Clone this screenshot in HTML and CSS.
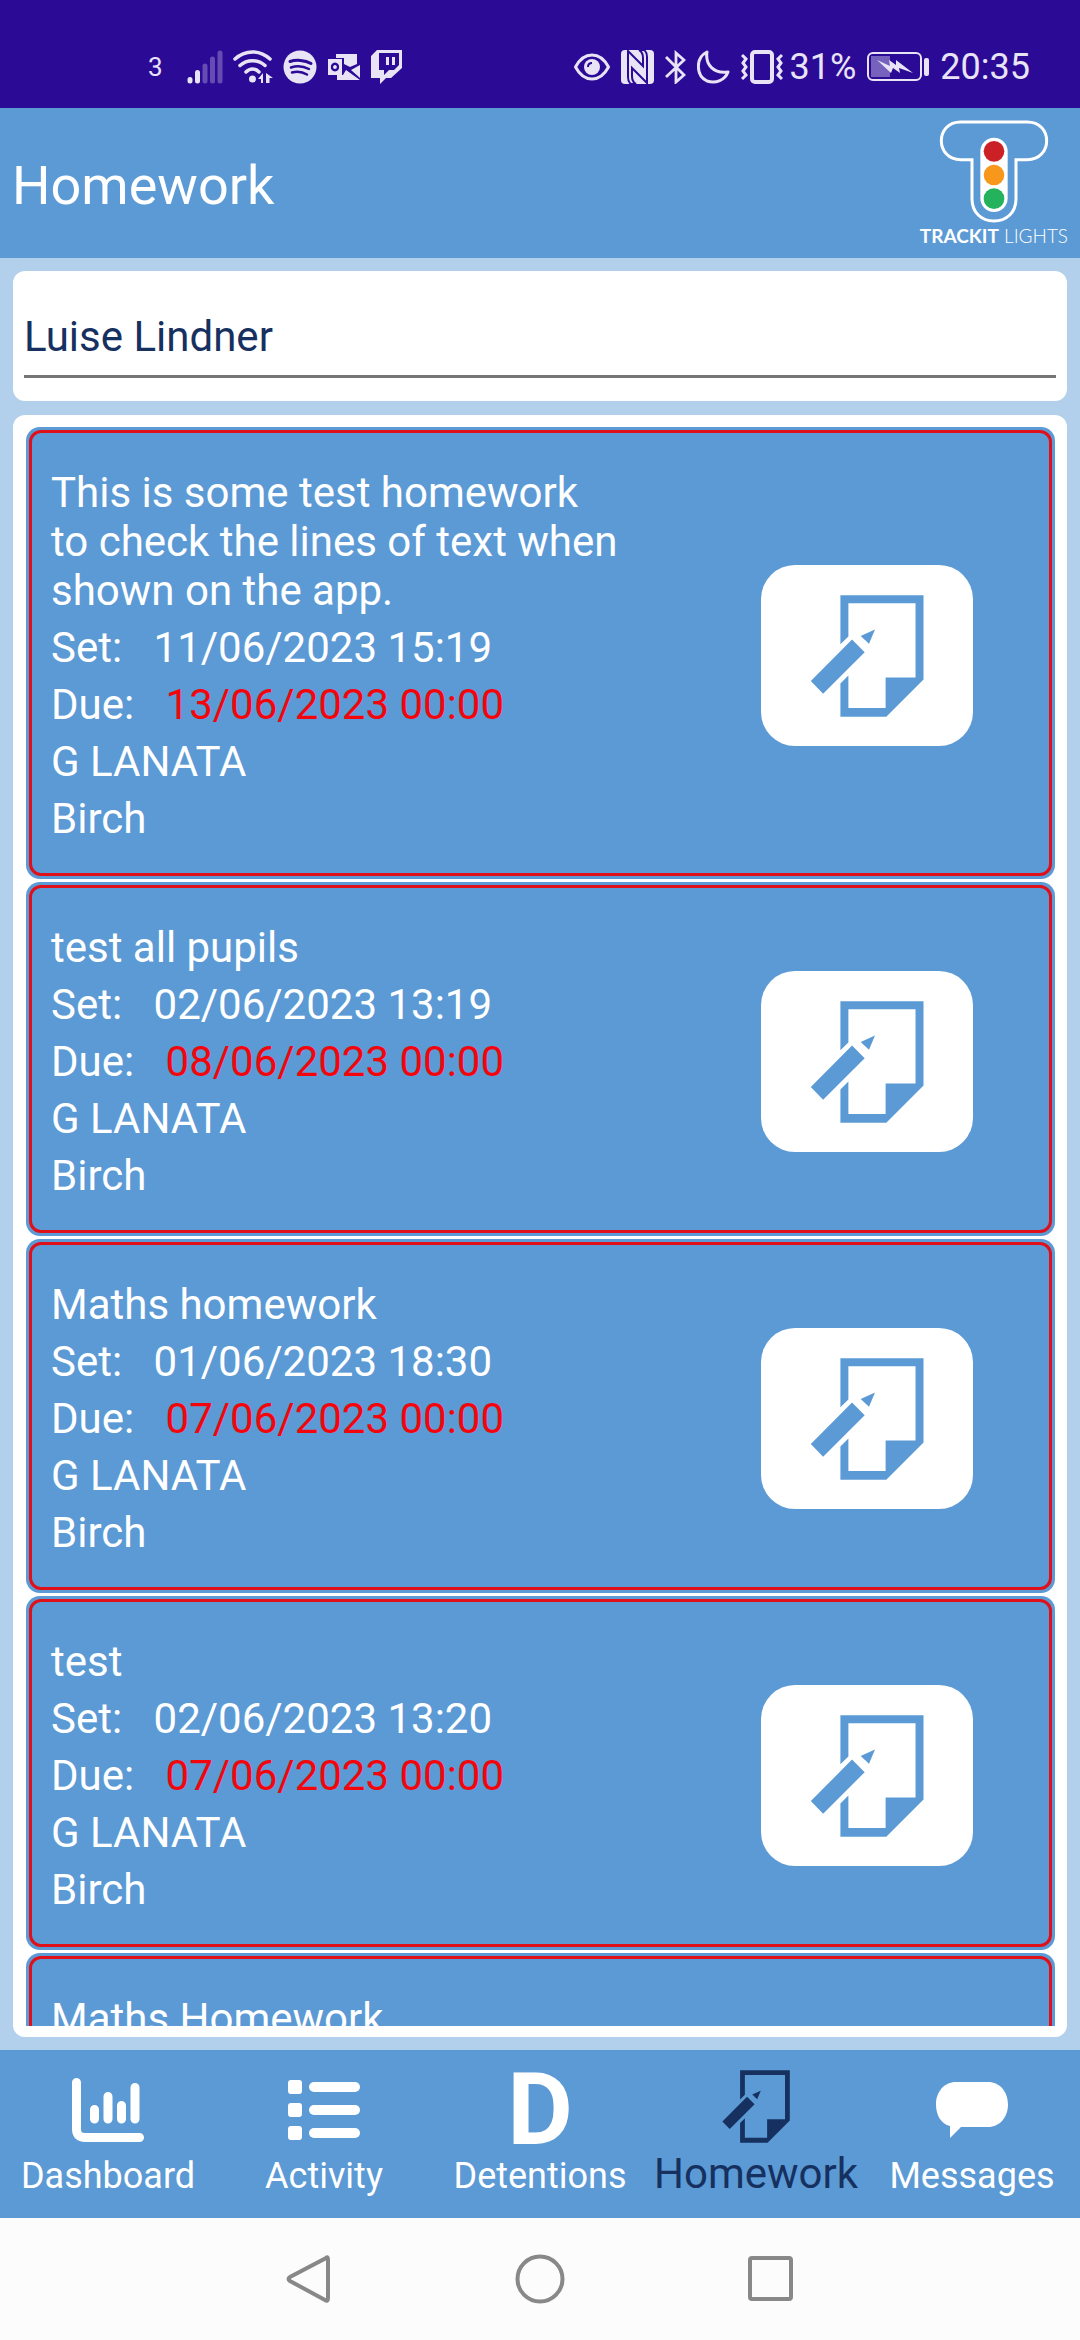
FILE: index.html
```html
<!DOCTYPE html>
<html lang="en">
  <head>
    <meta charset="UTF-8" />
    <meta name="viewport" content="width=device-width, initial-scale=1.0" />
    <title>Homework</title>
    <link rel="stylesheet" href="styles.css">
  </head>
  <body>
    <!-- shared shapes -->
    <svg class="sprite" aria-hidden="true">
      <symbol id="homework-icon" viewBox="208 158 340 367">
        <path d="M298 306V159H548V412L436 524H298V424L322 400V498H434V406H524V183H322V283Z" />
        <path d="M333 292L371 330L246 455L209 417Z" />
        <path d="M402 262L384 305L359 281Z" />
      </symbol>
    </svg>

    <div class="status-bar">
      <div class="status-left">
        <span class="notification-count">3</span>
        <svg width="36" height="34" viewBox="0 0 36 34" stroke="currentColor" stroke-width="5" stroke-linecap="round">
          <path d="M3 29.500V31M10.500 22.500V31" />
          <path d="M18 16V31M25.500 9V31M33 3V31" opacity="0.3" />
        </svg>
        <svg width="40" height="34" viewBox="0 0 40 34" fill="none" stroke="currentColor" stroke-width="3.500" stroke-linecap="round">
          <path d="M2 9C12 -.5 27 -.5 37 9M7 15.500C14 9 25 9 32 15.500M13 22C17 18 22 18 26 22" />
          <circle cx="19.500" cy="29" r="3.500" fill="currentColor" stroke="none" />
          <path d="M25 29L30 23V33H28V29ZM33 33V23L40 28H36.500V33Z" fill="currentColor" stroke="none" />
        </svg>
        <svg width="34" height="34" viewBox="0 0 34 34" fill="none" stroke-linecap="round">
          <circle cx="17" cy="17" r="16.500" fill="currentColor" />
          <path d="M7 11.500C13 9.500 22 10 28 13.500" stroke="#2b0a96" stroke-width="3" />
          <path d="M8 17.500C14 15.500 20 16 26 19" stroke="#2b0a96" stroke-width="2.500" />
          <path d="M9 22.500C14 21 19 21.500 24 24.500" stroke="#2b0a96" stroke-width="2.500" />
        </svg>
        <svg width="34" height="28" viewBox="0 0 34 28" fill="currentColor">
          <path d="M9 1H30V11L23 14L17 11V5H9Z" />
          <path d="M33 12V25L24 17Z" />
          <path d="M10 26V22H16L19 17L33 27H10Z" />
          <path fill-rule="evenodd" d="M1 6H15V22H1ZM8 9.500C2.500 9.500 2.500 18.500 8 18.500S13.500 9.500 8 9.500ZM8 12C10.500 12 10.500 16 8 16S5.500 12 8 12Z" />
        </svg>
        <svg width="32" height="34" viewBox="0 0 32 34" fill="currentColor">
          <path fill-rule="evenodd" d="M6 0H31V18L20 28H15L9 34V28H0V6ZM8 3V20H13V25L18 20H23L28 15V3Z" />
          <path d="M15 7H18V15H15ZM21 7H24V15H21Z" />
        </svg>
      </div>
      <div class="status-right">
        <svg width="36" height="28" viewBox="0 0 36 28" fill="none" stroke="currentColor" stroke-width="3">
          <path d="M1.500 14C10 -2 26 -2 34.500 14C26 30 10 30 1.500 14Z" />
          <circle cx="18" cy="14" r="8" fill="currentColor" stroke="none" />
          <path d="M14 14C14 11 16 10 18 10" stroke="#2b0a96" stroke-width="2" />
        </svg>
        <svg width="33" height="34" viewBox="0 0 33 34">
          <rect width="33" height="34" rx="4" fill="currentColor" />
          <path d="M10 34Q7 32 7 27V1L22 16V8Q22 2 18 0H23Q26 2 26 7V33L11 18V26Q11 32 15 34Z" fill="none" stroke="#2b0a96" stroke-width="2" />
        </svg>
        <svg width="21" height="34" viewBox="0 0 21 34" fill="none" stroke="currentColor" stroke-width="2.800">
          <path d="M1 7L19 25L11 32V3L19 10L1 27" />
        </svg>
        <svg width="33" height="34" viewBox="0 0 33 34" fill="none" stroke="currentColor" stroke-width="3" stroke-linejoin="round">
          <path d="M10 2C-2 8 -1 26 10 31C19 34 28 30 31 22C17 24 8 15 10 2Z" />
        </svg>
        <svg width="42" height="34" viewBox="0 0 42 34" fill="none" stroke="currentColor" stroke-width="3">
          <rect x="11" y="2" width="20" height="30" rx="3" stroke-width="4" />
          <path d="M1 5L5 9L2 13L5 17L2 21L5 25L1 29M41 5L37 9L40 13L37 17L40 21L37 25L41 29" />
        </svg>
        <span class="battery-level">31%</span>
        <svg width="62" height="30" viewBox="0 0 62 30">
          <rect x="1" y="1" width="53" height="27" rx="5" fill="none" stroke="currentColor" stroke-width="2" />
          <rect x="4" y="4" width="19" height="21" fill="currentColor" opacity="0.400" />
          <path d="M10 8L23 14L22 8L29 13L29 8L46 21L32 16L33 21L26 16L24 21Z" fill="currentColor" />
          <rect x="57" y="6" width="5" height="18" rx="2" fill="currentColor" />
        </svg>
        <span>20:35</span>
      </div>
    </div>

    <header class="app-header">
      <h1>Homework</h1>
      <div class="logo">
        <svg width="112" height="105" viewBox="120 58 336 315">
          <path d="M188 67H388C426 67 446 94 446 123S426 180 388 180H354V298C354 338 326 364 288 364S222 338 222 298V180H188C150 180 130 152 130 123S150 67 188 67Z" fill="none" stroke="#fff" stroke-width="9" />
          <rect x="247" y="114" width="82" height="223" rx="41" fill="#fff" />
          <circle cx="288" cy="155" r="31" fill="#cb2026" />
          <circle cx="288" cy="226" r="31" fill="#f7981d" />
          <circle cx="288" cy="297" r="31" fill="#24b25c" />
        </svg>
        <p><strong>TRACKIT</strong> LIGHTS</p>
      </div>
    </header>

    <main>
      <div class="panel pupil-panel">
        <select class="pupil-select" aria-label="Pupil">
          <option>Luise Lindner</option>
        </select>
      </div>

      <div class="panel list-panel">
        <ul class="homework-list">
          <li class="card">
            <div class="card-inner">
              <div class="card-text">
                <h2>This is some test homework to check the lines of text when shown on the app.</h2>
                <p>Set: <span class="date">11/06/2023 15:19</span></p>
                <p>Due: <span class="date due">13/06/2023 00:00</span></p>
                <p>G LANATA</p>
                <p>Birch</p>
              </div>
              <button class="open-button" aria-label="Open homework"><svg><use href="#homework-icon" /></svg></button>
            </div>
          </li>
          <li class="card">
            <div class="card-inner">
              <div class="card-text">
                <h2>test all pupils</h2>
                <p>Set: <span class="date">02/06/2023 13:19</span></p>
                <p>Due: <span class="date due">08/06/2023 00:00</span></p>
                <p>G LANATA</p>
                <p>Birch</p>
              </div>
              <button class="open-button" aria-label="Open homework"><svg><use href="#homework-icon" /></svg></button>
            </div>
          </li>
          <li class="card">
            <div class="card-inner">
              <div class="card-text">
                <h2>Maths homework</h2>
                <p>Set: <span class="date">01/06/2023 18:30</span></p>
                <p>Due: <span class="date due">07/06/2023 00:00</span></p>
                <p>G LANATA</p>
                <p>Birch</p>
              </div>
              <button class="open-button" aria-label="Open homework"><svg><use href="#homework-icon" /></svg></button>
            </div>
          </li>
          <li class="card">
            <div class="card-inner">
              <div class="card-text">
                <h2>test</h2>
                <p>Set: <span class="date">02/06/2023 13:20</span></p>
                <p>Due: <span class="date due">07/06/2023 00:00</span></p>
                <p>G LANATA</p>
                <p>Birch</p>
              </div>
              <button class="open-button" aria-label="Open homework"><svg><use href="#homework-icon" /></svg></button>
            </div>
          </li>
          <li class="card">
            <div class="card-inner">
              <div class="card-text">
                <h2>Maths Homework</h2>
              </div>
            </div>
          </li>
        </ul>
      </div>
    </main>

    <nav class="tab-bar">
      <a href="#dashboard" class="tab">
        <span class="tab-icon">
          <svg width="72" height="64" viewBox="0 0 72 64" fill="none" stroke="currentColor" stroke-width="9" stroke-linecap="round">
            <path d="M4.500 4.500V51Q4.500 59.500 13 59.500H67.500" />
            <path d="M22.500 31.500V41M36 18.500V41M49.500 27.500V41M63 9.500V41" />
          </svg>
        </span>
        <span class="tab-label">Dashboard</span>
      </a>
      <a href="#activity" class="tab">
        <span class="tab-icon">
          <svg width="72" height="60" viewBox="0 0 72 60" fill="currentColor">
            <rect width="14" height="14" rx="3" />
            <rect y="23" width="14" height="14" rx="3" />
            <rect y="46" width="14" height="14" rx="3" />
            <rect x="21" y="2" width="51" height="10" rx="5" />
            <rect x="21" y="25" width="51" height="10" rx="5" />
            <rect x="21" y="48" width="51" height="10" rx="5" />
          </svg>
        </span>
        <span class="tab-label">Activity</span>
      </a>
      <a href="#detentions" class="tab">
        <span class="tab-icon letter-icon">D</span>
        <span class="tab-label">Detentions</span>
      </a>
      <a href="#homework" class="tab active">
        <span class="tab-icon"><svg width="68" height="73"><use href="#homework-icon" /></svg></span>
        <span class="tab-label">Homework</span>
      </a>
      <a href="#messages" class="tab">
        <span class="tab-icon">
          <svg width="72" height="56" viewBox="0 0 72 56" fill="currentColor">
            <path d="M20 0H52C64 0 72 10 72 22.500S64 45 52 45H25L14 56V44C5 42 0 33 0 22.500C0 10 8 0 20 0Z" />
          </svg>
        </span>
        <span class="tab-label">Messages</span>
      </a>
    </nav>

    <div class="system-nav">
      <button aria-label="Back">
        <svg width="50" height="50" viewBox="0 0 50 50"><path d="M42 4Q44 2 44 6V44Q44 48 41 46L6 27Q3 25 6 23Z" /></svg>
      </button>
      <button aria-label="Home">
        <svg width="50" height="50" viewBox="0 0 50 50"><circle cx="25" cy="25" r="22.500" /></svg>
      </button>
      <button aria-label="Recent apps">
        <svg width="50" height="50" viewBox="0 0 50 50"><rect x="4" y="4" width="41" height="41" rx="2" /></svg>
      </button>
    </div>
  </body>
</html>
```
FILE: styles.css
```css
* {
  box-sizing: border-box;
}

body {
  margin: 0;
  height: 100vh;
  display: flex;
  flex-direction: column;
  background-color: #b2d0ec;
  font-family: Roboto, sans-serif;
  font-size: 42px;
  color: #fff;
}

h1, h2, p, ul {
  margin: 0;
  padding: 0;
  font-weight: 400;
}

svg {
  display: block;
  flex-shrink: 0;
}

button {
  border: none;
  padding: 0;
  cursor: pointer;
}

.sprite {
  position: absolute;
  width: 0;
  height: 0;
}

/* Phone status bar */
.status-bar {
  height: 108px;
  padding: 26px 50px 0 148px;
  display: flex;
  justify-content: space-between;
  background-color: #2b0a96;
  color: #e8e4f6;
  font-size: 36px;
}

.status-left,
.status-right {
  display: flex;
  align-items: center;
  gap: 10px;
}

.status-right {
  gap: 11px;
}

.notification-count {
  margin-right: 14px;
  font-size: 26px;
}

.battery-level {
  margin-left: -4px;
}

/* Header */
.app-header {
  height: 150px;
  padding: 0 12px;
  display: flex;
  align-items: center;
  justify-content: space-between;
  background-color: #5b9ad5;
}

.app-header h1 {
  padding-top: 5px;
  font-size: 54px;
}

.logo {
  display: flex;
  flex-direction: column;
  align-items: center;
}

.logo p {
  font-family: Lato, sans-serif;
  font-size: 19px;
  font-weight: 300;
  line-height: 24px;
}

.logo strong {
  font-weight: 700;
}

/* Content */
main {
  flex: 1;
  min-height: 0;
  padding: 13px;
  display: flex;
  flex-direction: column;
  gap: 14px;
}

.panel {
  background-color: #fff;
  border-radius: 12px;
}

.pupil-panel {
  height: 130px;
  padding: 11px;
}

.pupil-select {
  width: 100%;
  height: 96px;
  padding: 16px 0 0;
  appearance: none;
  border: none;
  border-bottom: 3px solid #757575;
  border-radius: 0;
  background: none;
  font: inherit;
  color: #16305f;
}

.list-panel {
  flex: 1;
  min-height: 0;
  padding: 12px 12px 11px 13px;
}

.homework-list {
  height: 100%;
  display: flex;
  flex-direction: column;
  gap: 3px;
  overflow-y: auto;
  scrollbar-width: none;
  list-style: none;
}

.card {
  flex-shrink: 0;
  padding: 3px;
  border-radius: 14px;
  background-color: #5b9ad5;
}

.card-inner {
  padding: 35px 0 30px 19px;
  display: grid;
  grid-template-columns: 572px 1fr;
  align-items: center;
  border: 3px solid #e0101a;
  border-radius: 12px;
}

.card-text {
  display: flex;
  flex-direction: column;
  gap: 8px;
  line-height: 49px;
}

.card-text h2 {
  font-size: 42px;
}

.date {
  margin-left: 21px;
}

.due {
  color: #f4050c;
}

.open-button {
  width: 212px;
  height: 181px;
  margin-left: 62px;
  display: flex;
  align-items: center;
  justify-content: center;
  justify-self: center;
  border-radius: 34px;
  background-color: #fff;
}

.open-button svg {
  width: 114px;
  height: 122px;
  fill: #5b9ad5;
}

/* Bottom tabs */
.tab-bar {
  height: 168px;
  display: grid;
  grid-template-columns: repeat(5, 1fr);
  background-color: #5b9ad5;
}

.tab {
  padding-bottom: 21px;
  display: flex;
  flex-direction: column;
  align-items: center;
  justify-content: flex-end;
  gap: 9px;
  color: #fff;
  text-decoration: none;
}

.tab-icon {
  height: 72px;
  display: flex;
  align-items: center;
  fill: currentColor;
}

.letter-icon {
  font-size: 101px;
  font-weight: 700;
  line-height: 72px;
}

.tab-label {
  font-size: 36px;
  line-height: 42px;
}

.tab.active {
  color: #16305f;
}

.active .tab-label {
  font-size: 42px;
  line-height: 46px;
}

/* Android buttons */
.system-nav {
  height: 122px;
  display: flex;
  align-items: center;
  justify-content: center;
  gap: 181px;
  background-color: #fcfcfc;
}

.system-nav button {
  background: none;
}

.system-nav svg {
  fill: none;
  stroke: #888;
  stroke-width: 4px;
}
```
